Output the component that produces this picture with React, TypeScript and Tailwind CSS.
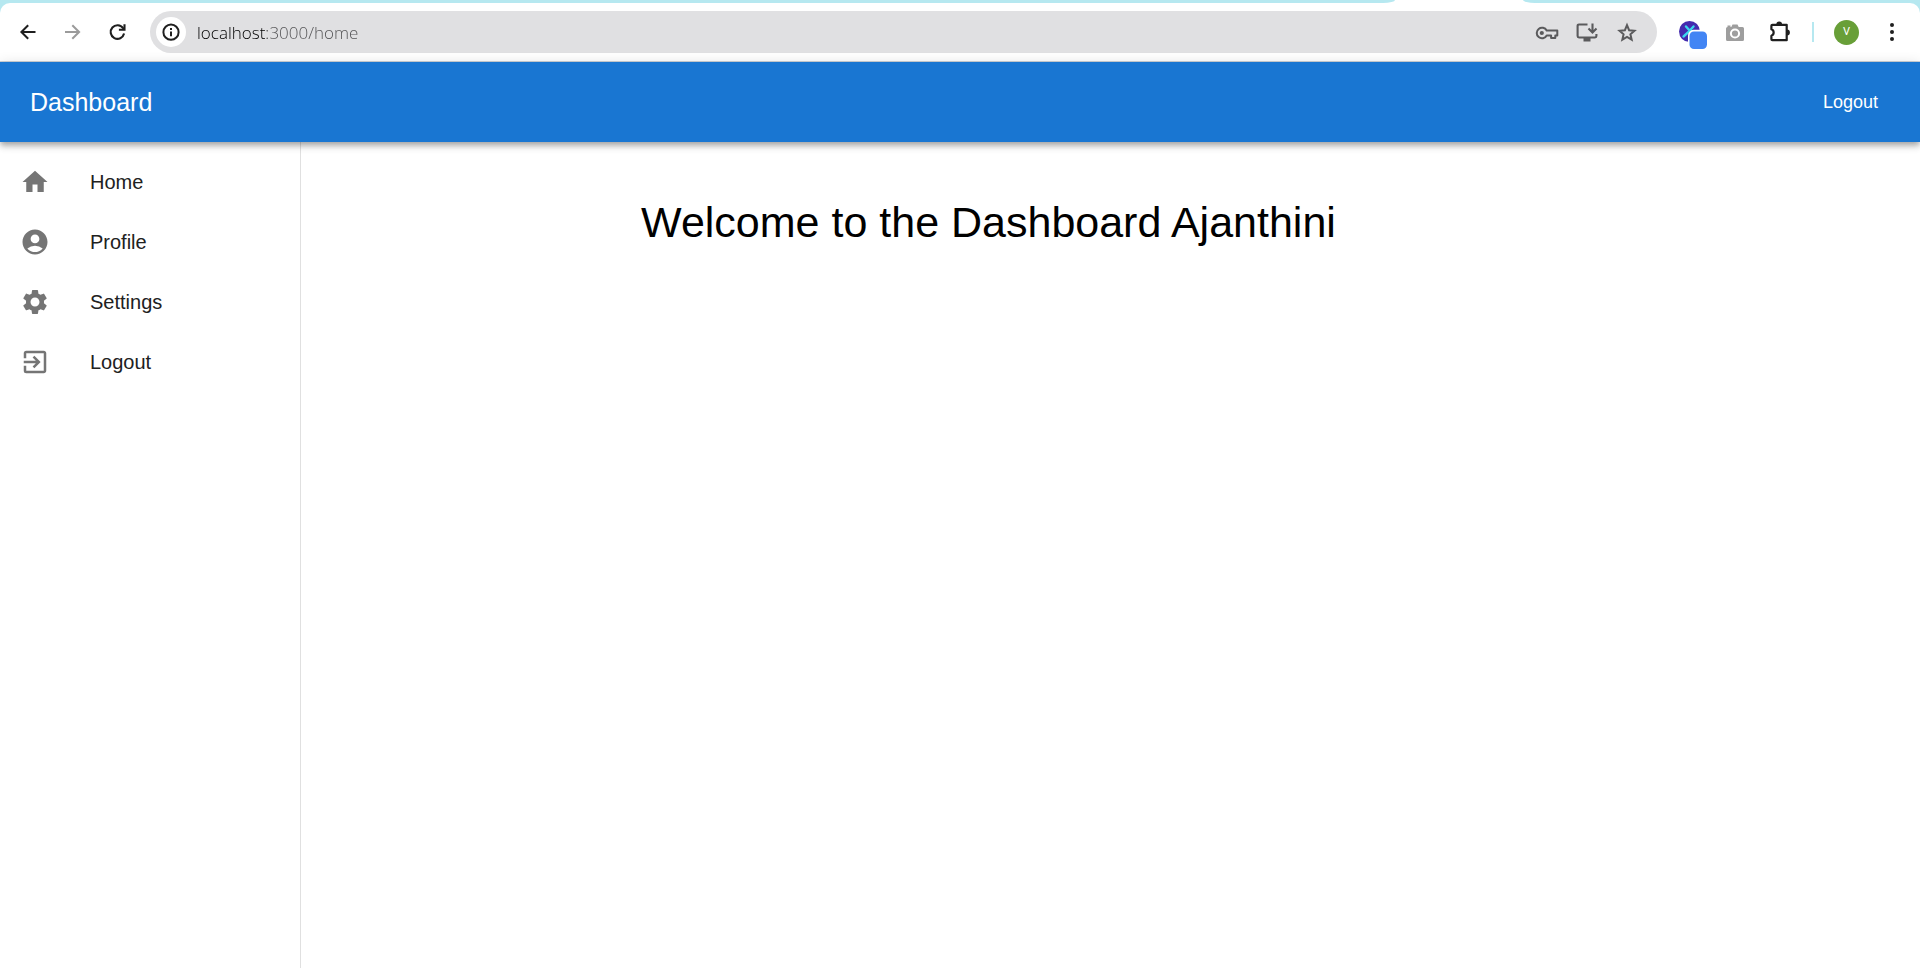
import type { ReactNode } from "react";
import { MdAccountCircle, MdExitToApp, MdHome, MdSettings } from "react-icons/md";

type MenuItem = { label: string; icon: ReactNode };

const menu: MenuItem[] = [
  { label: "Home", icon: <MdHome size={30} /> },
  { label: "Profile", icon: <MdAccountCircle size={30} /> },
  { label: "Settings", icon: <MdSettings size={30} /> },
  { label: "Logout", icon: <MdExitToApp size={30} /> },
];

function ToolButton({ label, className = "w-[45px]", children }: { label: string; className?: string; children: ReactNode }) {
  return (
    <button type="button" aria-label={label} className={`flex h-[42px] shrink-0 items-center justify-center ${className}`}>
      {children}
    </button>
  );
}

function BackIcon() {
  return (
    <svg width="20" height="20" viewBox="0 0 20 20" fill="none" stroke="currentColor" strokeWidth="2">
      <path d="M17.5 10H4M10.2 3.2 3.4 10l6.8 6.8" />
    </svg>
  );
}

function ForwardIcon() {
  return (
    <svg width="20" height="20" viewBox="0 0 20 20" fill="none" stroke="currentColor" strokeWidth="2">
      <path d="M2 10H15.500M9.300 3.200l6.800 6.800-6.800 6.800" />
    </svg>
  );
}

function ReloadIcon() {
  return (
    <svg width="20" height="20" viewBox="0 0 20 20" fill="none" stroke="currentColor" strokeWidth="2.1">
      <path d="M16.1 11.6A6.8 6.8 0 1 1 15.1 6.2L16.3 7.6" />
      <path d="M16.500 2.200v5.600h-5.600" />
    </svg>
  );
}

function InfoIcon() {
  return (
    <svg width="18" height="18" viewBox="0 0 18 18" fill="none" stroke="currentColor" strokeWidth="2">
      <circle cx="9" cy="9.200" r="7.600" />
      <path d="M9 8.400v4.900M9 5v2" />
    </svg>
  );
}

function KeyIcon() {
  return (
    <svg width="24" height="18" viewBox="0 0 24 18" fill="none" stroke="currentColor" strokeWidth="2">
      <path d="M11.700 7.500h10.600v5h-2v2.600h-4.200v-2.600h-4.400a5.300 5.300 0 1 1 0-5Z" strokeLinejoin="round" />
      <circle cx="6.800" cy="10" r="2.100" fill="currentColor" stroke="none" />
    </svg>
  );
}

function InstallIcon() {
  return (
    <svg width="22" height="20" viewBox="0 0 22 20" fill="none" stroke="currentColor" strokeWidth="2.100">
      <path d="M11.500 2.500H3Q1.600 2.500 1.600 3.900v10.200q0 1.400 1.400 1.400h16q1.400 0 1.400-1.400V12" />
      <path d="M16.500 1.500v8.500M12.500 6.500l4 4 4-4" />
      <path d="M7.500 16h7v3.500h-7z" fill="currentColor" stroke="none" />
    </svg>
  );
}

function StarIcon() {
  return (
    <svg width="20" height="20" viewBox="0 0 20 20" fill="none" stroke="currentColor" strokeWidth="2">
      <path d="m10 3.200 2.100 5 5.400.5-4.100 3.600 1.250 5.300L10 14.800l-4.650 2.800 1.250-5.300L2.500 8.700l5.400-.5Z" />
    </svg>
  );
}

function ExtensionBadgeIcon() {
  return (
    <svg width="30" height="30" viewBox="0 0 30 30">
      <circle cx="11.500" cy="11.500" r="10.500" fill="#452bae" />
      <path d="M5.500 16.500 10 12.500 15.500 6.500M8 6.500l4 4.500 6 1" fill="none" stroke="#3ad7ee" strokeWidth="2.400" strokeLinecap="round" />
      <rect x="10" y="9.800" width="21" height="21" rx="5.500" fill="#fff" />
      <rect x="11.500" y="11.500" width="17.500" height="17.500" rx="4.500" fill="#4285f4" />
    </svg>
  );
}

function CameraIcon() {
  return (
    <svg width="20" height="22" viewBox="0 0 20 22" fill="#9e9e9e">
      <path d="M2.500 6V4.500h3V6h.8L7.500 3.500h5L13.700 6h3.800Q19 6 19 7.500v11q0 1.500-1.500 1.500h-15Q1 20 1 18.500v-11Q1 6 2.500 6Z" />
      <circle cx="10" cy="12.500" r="4.100" fill="none" stroke="#fff" strokeWidth="2" />
    </svg>
  );
}

function PuzzleIcon() {
  return (
    <svg width="24" height="24" viewBox="0 0 24 24">
      <path d="M4.400 4.800h14.300v15.400H4.400q-1 0-1-1v-3.500a3.400 3.400 0 0 0 0-6.400V5.800q0-1 1-1Z" fill="none" stroke="currentColor" strokeWidth="2.200" strokeLinejoin="round" />
      <path d="M8.300 4.400a2.900 2.900 0 0 1 5.800 0ZM19 9.600a2.900 2.900 0 0 1 0 5.800Z" fill="currentColor" />
    </svg>
  );
}

function MoreIcon() {
  return (
    <svg width="6" height="20" viewBox="0 0 6 20" fill="currentColor">
      <circle cx="3" cy="3" r="2" />
      <circle cx="3" cy="10" r="2" />
      <circle cx="3" cy="17" r="2" />
    </svg>
  );
}

function BrowserBar() {
  return (
    <div className="bg-[#b6e8f0]">
      <div className="flex h-[3px] bg-white">
        <div className="grow bg-[#b6e8f0] [border-bottom-right-radius:12px_3px]" />
        <div className="w-[128px]" />
        <div className="w-[397px] bg-[#b6e8f0] [border-bottom-left-radius:12px_3px]" />
      </div>
      <div className="flex items-center rounded-t-[10px] border-b border-[#cfd3d8] bg-white py-2 pr-[6px] pl-[5px] text-[#1f1f1f]">
        <ToolButton label="Back"><BackIcon /></ToolButton>
        <ToolButton label="Forward" className="w-[45px] text-[#9b9b9b]"><ForwardIcon /></ToolButton>
        <ToolButton label="Reload"><ReloadIcon /></ToolButton>
        <div className="mx-[10px] flex h-[42px] grow items-center rounded-full bg-[#e0e0e2] pr-[10px] pl-[6px] text-[#5a5a5c]">
          <button type="button" aria-label="Site information" className="flex size-[30px] shrink-0 items-center justify-center rounded-full bg-white text-[#1f1f1f]">
            <InfoIcon />
          </button>
          <input
            type="text"
            aria-label="Address"
            defaultValue="localhost:3000/home"
            className="ml-[11px] min-w-0 grow bg-linear-to-r from-black from-[70px] to-[#505052] to-[70px] bg-clip-text pt-px font-['Open_Sans',sans-serif] text-[17px] leading-6 font-light text-transparent outline-none"
          />
          <ToolButton label="Passwords" className="w-10"><KeyIcon /></ToolButton>
          <ToolButton label="Install app" className="w-10"><InstallIcon /></ToolButton>
          <ToolButton label="Bookmark" className="w-10"><StarIcon /></ToolButton>
        </div>
        <ToolButton label="Extension" className="w-[45px] pt-[6px] pl-[6px]"><ExtensionBadgeIcon /></ToolButton>
        <ToolButton label="Screenshot"><CameraIcon /></ToolButton>
        <ToolButton label="Extensions"><PuzzleIcon /></ToolButton>
        <div className="mx-[10px] h-5 w-[2px] bg-[#b6e8f0]" />
        <ToolButton label="Account">
          <span className="flex size-[25px] items-center justify-center rounded-full bg-[#689f38] font-[Roboto,sans-serif] text-[11px] text-white">V</span>
        </ToolButton>
        <ToolButton label="More"><MoreIcon /></ToolButton>
      </div>
    </div>
  );
}

export default function App() {
  return (
    <div className="flex min-h-screen flex-col bg-white font-['Liberation_Sans',Arial,sans-serif]">
      <BrowserBar />
      <header className="relative z-10 flex h-20 shrink-0 items-center justify-between bg-[#1976d2] px-[30px] text-white shadow-[0_3px_5px_-1px_rgba(0,0,0,0.2),0_5px_6px_0_rgba(0,0,0,0.14),0_1px_12px_0_rgba(0,0,0,0.12)]">
        <div className="text-[25px] leading-10">Dashboard</div>
        <button type="button" className="px-3 py-2 text-[18px] leading-8">Logout</button>
      </header>
      <div className="flex grow">
        <nav className="w-[301px] shrink-0 border-r border-[#e0e0e0] py-[10px]">
          <ul>
            {menu.map((item) => (
              <li key={item.label}>
                <a href="#" className="flex h-[60px] items-center gap-10 px-5 text-[20px] leading-[30px] text-[#212121]">
                  <span className="text-[#757575]">{item.icon}</span>
                  {item.label}
                </a>
              </li>
            ))}
          </ul>
        </nav>
        <main className="grow pt-[54px] pr-[244px]">
          <h1 className="text-center text-[43px] leading-[52px] text-black">Welcome to the Dashboard Ajanthini</h1>
        </main>
      </div>
    </div>
  );
}
